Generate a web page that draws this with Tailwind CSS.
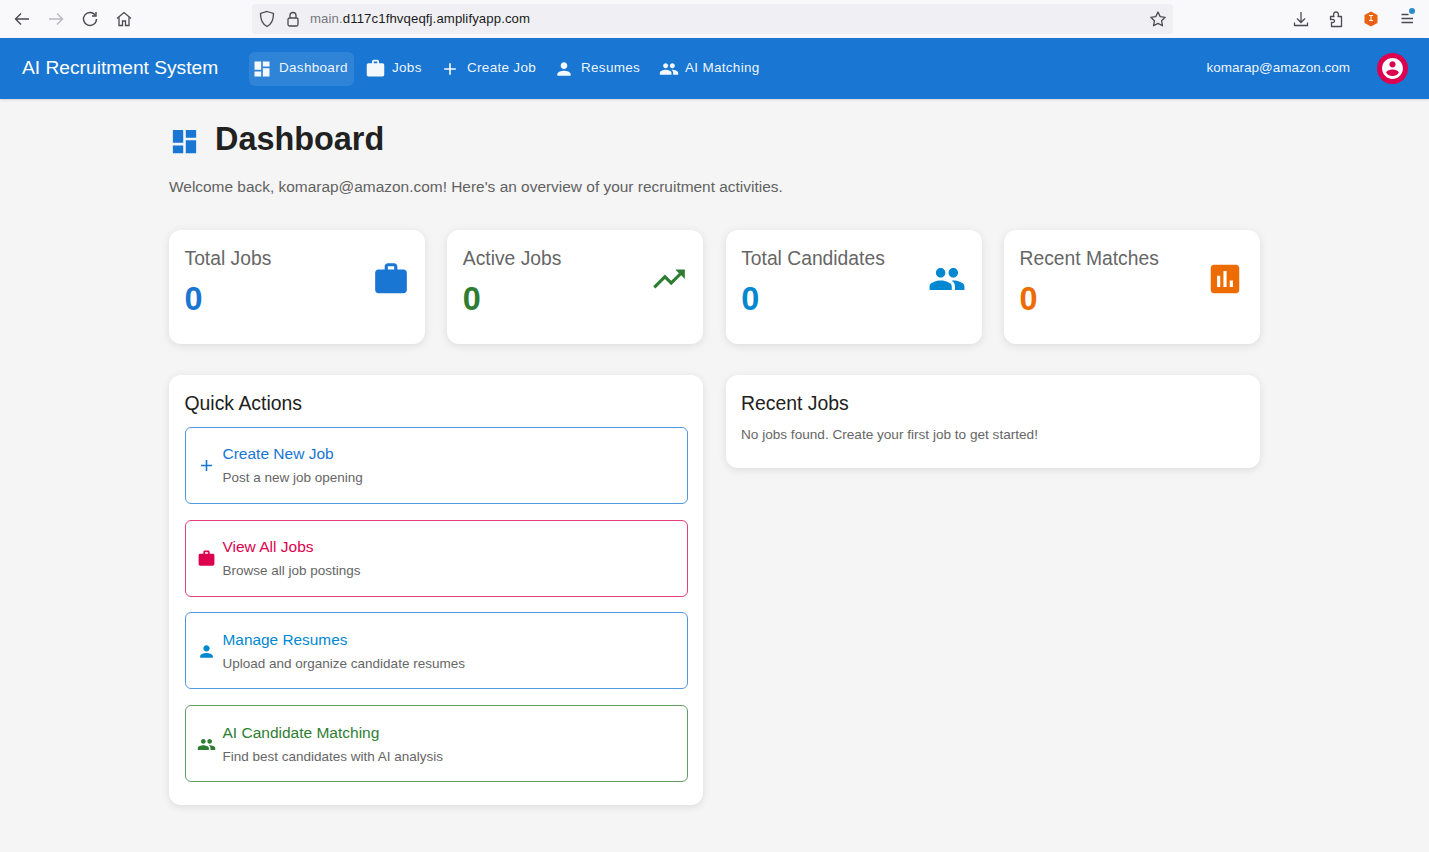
<!DOCTYPE html>
<html lang="en">
  <head>
    <meta charset="UTF-8" />
    <meta name="viewport" content="width=device-width, initial-scale=1.0" />
    <title>AI Recruitment System</title>
    <script src="https://cdn.jsdelivr.net/npm/@tailwindcss/browser@4"></script>
  </head>
  <body class="bg-[#f5f5f5] font-['Liberation_Sans',Arial,sans-serif] h-[852px] overflow-hidden">
    <!-- browser toolbar -->
    <div class="h-[38px] bg-[#f9f9fb] flex items-center text-[#4a4a4f]">
      <div class="w-[252px] flex items-center pl-[13px] gap-[16px] shrink-0">
        <svg class="w-[18px] h-[18px]" viewBox="0 0 18 18" fill="none" stroke="currentColor" stroke-width="1.4"><path d="M16 9H2.5M8 3.5 2.5 9 8 14.5" /></svg>
        <svg class="w-[18px] h-[18px] text-[#b9b9bd]" viewBox="0 0 18 18" fill="none" stroke="currentColor" stroke-width="1.4"><path d="M2 9h13.5M10 3.5 15.5 9 10 14.5" /></svg>
        <svg class="w-[18px] h-[18px]" viewBox="0 0 18 18" fill="none" stroke="currentColor" stroke-width="1.4"><path d="M14.5 5.5A6.5 6.5 0 1 0 15.5 9" /><path d="M15 2v4h-4" /></svg>
        <svg class="w-[18px] h-[18px]" viewBox="0 0 18 18" fill="none" stroke="currentColor" stroke-width="1.3"><path d="M2 8.5 9 2.5l7 6M4 7.5V15.5h3.5V11h3v4.5H14V7.5" /></svg>
      </div>
      <div class="w-[921px] h-[30px] bg-[#f0f0f4] rounded-[4px] flex items-center pl-[6px] pr-[6px] shrink-0">
        <svg class="w-[16px] h-[18px] ml-[1px]" viewBox="0 0 16 18" fill="none" stroke="currentColor" stroke-width="1.3"><path d="M8 1.5 14.5 3.5C14.5 10 13 14 8 16.5 3 14 1.5 10 1.5 3.5z" /></svg>
        <svg class="w-[14px] h-[16px] ml-[11px]" viewBox="0 0 14 16" fill="none" stroke="currentColor" stroke-width="1.3"><rect x="2" y="7" width="10" height="8" rx="1.5" /><path d="M4 7V4.5a3 3 0 0 1 6 0V7" /></svg>
        <span class="ml-[10px] text-[13.2px] text-[#77777c] tracking-[0.1px]">main.<span class="text-[#1c1b22]">d117c1fhvqeqfj.amplifyapp.com</span></span>
        <svg class="w-[18px] h-[18px] ml-auto" viewBox="0 0 18 18" fill="none" stroke="currentColor" stroke-width="1.3" stroke-linejoin="round"><path d="m9 2 2.2 4.6 5 .7-3.6 3.5.9 5L9 13.4l-4.5 2.4.9-5L1.8 7.3l5-.7z" /></svg>
      </div>
      <div class="flex-1 flex items-center justify-end pr-[13px] gap-[17px]">
        <svg class="w-[18px] h-[18px]" viewBox="0 0 18 18" fill="none" stroke="currentColor" stroke-width="1.3"><path d="M9 2v10M5 8.500l4 4 4-4M2.500 12.500v3h13v-3" /></svg>
        <svg class="w-[18px] h-[18px]" viewBox="0 0 18 18" fill="none" stroke="currentColor" stroke-width="1.3" stroke-linejoin="round"><path d="M3.500 6.500H7C6 4.500 6.500 2 9 2s3 2.500 2 4.500h3.500V16.500H4.500v-4c2 .5 3-.5 3-1.500s-1.500-2-4-1.500z" /></svg>
        <svg class="w-[18px] h-[18px]" viewBox="0 0 18 18"><path d="M9 1.500 15.500 5v8L9 16.500 2.500 13V5z" fill="#ea640f" /><path d="M7 5.500h4M9 5.500v5M7 10.500h4" stroke="#fff" stroke-width="1" fill="none" /><path d="M6 13h1M9 14h1M11 12.500h1" stroke="#d92d7a" stroke-width="1" /></svg>
        <div class="relative w-[18px] h-[18px] ml-[1px]">
          <svg class="w-[18px] h-[18px]" viewBox="0 0 18 18" fill="none" stroke="currentColor" stroke-width="1.3"><path d="M3.500 4.500h7M3.500 8.500h11.500M3.500 12.500h11.500" /></svg>
          <span class="absolute right-[1px] top-[-2px] w-[6px] h-[6px] rounded-full bg-[#2b8ccb]"></span>
        </div>
      </div>
    </div>

    <!-- app bar -->
    <nav class="h-[61px] bg-[#1976d2] text-white flex items-center pl-[22px] pr-[21px] shadow-sm">
      <span class="text-[19.2px] leading-none w-[227px] shrink-0 mb-[2px]">AI Recruitment System</span>
      <div class="flex items-center text-[13.5px] tracking-[0.3px] text-white/95">
        <a class="h-[34px] w-[105px] pl-[3px] rounded-[6px] bg-white/10 flex items-center gap-[7px]">
          <svg class="w-[20px] h-[20px] fill-current" viewBox="0 0 24 24"><path d="M3 13h8V3H3v10zm0 8h8v-6H3v6zm10 0h8V11h-8v10zm0-18v6h8V3h-8z" /></svg>Dashboard</a>
        <a class="h-[34px] w-[84px] pl-[11px] flex items-center gap-[6px]">
          <svg class="w-[21px] h-[21px] fill-current" viewBox="0 0 24 24"><path d="M20 6h-4V4c0-1.110-.89-2-2-2h-4c-1.110 0-2 .89-2 2v2H4c-1.110 0-1.990.89-1.990 2L2 19c0 1.110.89 2 2 2h16c1.110 0 2-.89 2-2V8c0-1.110-.89-2-2-2zm-6 0h-4V4h4v2z" /></svg>Jobs</a>
        <a class="h-[34px] w-[113px] pl-[2px] flex items-center gap-[7px]">
          <svg class="w-[20px] h-[20px] fill-current" viewBox="0 0 24 24"><path d="M19 13h-6v6h-2v-6H5v-2h6V5h2v6h6v2z" /></svg>Create Job</a>
        <a class="h-[34px] w-[106px] pl-[3px] flex items-center gap-[7px]">
          <svg class="w-[20px] h-[20px] fill-current" viewBox="0 0 24 24"><path d="M12 12c2.210 0 4-1.790 4-4s-1.790-4-4-4-4 1.790-4 4 1.790 4 4 4zm0 2c-2.670 0-8 1.340-8 4v2h16v-2c0-2.660-5.330-4-8-4z" /></svg>Resumes</a>
        <a class="h-[34px] pl-[2px] flex items-center gap-[6px]">
          <svg class="w-[20px] h-[20px] fill-current" viewBox="0 0 24 24"><path d="M16 11c1.660 0 2.990-1.340 2.990-3S17.660 5 16 5c-1.660 0-3 1.340-3 3s1.340 3 3 3zm-8 0c1.660 0 2.990-1.340 2.990-3S9.660 5 8 5C6.340 5 5 6.340 5 8s1.340 3 3 3zm0 2c-2.330 0-7 1.170-7 3.500V19h14v-2.500c0-2.330-4.670-3.500-7-3.500zm8 0c-.29 0-.62.02-.97.05 1.160.84 1.970 1.970 1.970 3.450V19h6v-2.500c0-2.330-4.670-3.500-7-3.500z" /></svg>AI Matching</a>
      </div>
      <span class="ml-auto text-[13.5px] text-white/95">komarap@amazon.com</span>
      <span class="ml-[27px] w-[31px] h-[31px] rounded-full bg-[#dc004e] flex items-center justify-center">
        <svg class="w-[25px] h-[25px] fill-white" viewBox="0 0 24 24"><path d="M12 2C6.480 2 2 6.480 2 12s4.480 10 10 10 10-4.480 10-10S17.520 2 12 2zm0 3c1.660 0 3 1.340 3 3s-1.340 3-3 3-3-1.340-3-3 1.340-3 3-3zm0 14.200c-2.500 0-4.710-1.280-6-3.220.03-1.990 4-3.080 6-3.080 1.990 0 5.970 1.090 6 3.080-1.290 1.940-3.500 3.220-6 3.220z" /></svg>
      </span>
    </nav>

    <main class="w-[1091px] ml-[169px]">
      <div class="flex items-center h-[80px]">
        <svg class="w-[31px] h-[31px] mt-[4px] fill-[#1976d2]" viewBox="0 0 24 24"><path d="M3 13h8V3H3v10zm0 8h8v-6H3v6zm10 0h8V11h-8v10zm0-18v6h8V3h-8z" /></svg>
        <h1 class="ml-[15px] text-[32.4px] font-bold text-[#212121] leading-none">Dashboard</h1>
      </div>
      <p class="text-[15.45px] text-[#616161] leading-[18px] mt-[-1px]">Welcome back, komarap@amazon.com! Here's an overview of your recruitment activities.</p>

      <!-- stat cards -->
      <div class="grid grid-cols-[repeat(4,256px)] gap-[22.33px] mt-[34px]">
        <div class="h-[114px] bg-white rounded-[12px] shadow-[0_2px_8px_rgba(0,0,0,0.1)] pl-[15.5px] pr-[15.5px] pt-[17px] flex justify-between">
          <div>
            <div class="text-[19.3px] leading-[23px] text-[#666666]">Total Jobs</div>
            <div class="text-[32.4px] font-bold leading-[38px] mt-[10px] text-[#1976d2]">0</div>
          </div>
          <svg class="w-[38px] h-[38px] mt-[13px] fill-[#1976d2]" viewBox="0 0 24 24"><path d="M20 6h-4V4c0-1.110-.89-2-2-2h-4c-1.110 0-2 .89-2 2v2H4c-1.110 0-1.990.89-1.990 2L2 19c0 1.110.89 2 2 2h16c1.110 0 2-.89 2-2V8c0-1.110-.89-2-2-2zm-6 0h-4V4h4v2z" /></svg>
        </div>
        <div class="h-[114px] bg-white rounded-[12px] shadow-[0_2px_8px_rgba(0,0,0,0.1)] pl-[15.5px] pr-[15.5px] pt-[17px] flex justify-between">
          <div>
            <div class="text-[19.3px] leading-[23px] text-[#666666]">Active Jobs</div>
            <div class="text-[32.4px] font-bold leading-[38px] mt-[10px] text-[#2e7d32]">0</div>
          </div>
          <svg class="w-[38px] h-[38px] mt-[13px] fill-[#2e7d32]" viewBox="0 0 24 24"><path d="M16 6l2.290 2.290-4.880 4.880-4-4L2 16.590 3.410 18l6-6 4 4 6.300-6.290L22 12V6z" /></svg>
        </div>
        <div class="h-[114px] bg-white rounded-[12px] shadow-[0_2px_8px_rgba(0,0,0,0.1)] pl-[15.5px] pr-[15.5px] pt-[17px] flex justify-between">
          <div>
            <div class="text-[19.3px] leading-[23px] text-[#666666]">Total Candidates</div>
            <div class="text-[32.4px] font-bold leading-[38px] mt-[10px] text-[#0288d1]">0</div>
          </div>
          <svg class="w-[38px] h-[38px] mt-[13px] fill-[#0288d1]" viewBox="0 0 24 24"><path d="M16 11c1.660 0 2.990-1.340 2.990-3S17.660 5 16 5c-1.660 0-3 1.340-3 3s1.340 3 3 3zm-8 0c1.660 0 2.990-1.340 2.990-3S9.660 5 8 5C6.340 5 5 6.340 5 8s1.340 3 3 3zm0 2c-2.330 0-7 1.170-7 3.500V19h14v-2.500c0-2.330-4.670-3.500-7-3.500zm8 0c-.29 0-.62.02-.97.05 1.160.84 1.970 1.970 1.970 3.450V19h6v-2.500c0-2.330-4.670-3.500-7-3.500z" /></svg>
        </div>
        <div class="h-[114px] bg-white rounded-[12px] shadow-[0_2px_8px_rgba(0,0,0,0.1)] pl-[15.5px] pr-[15.5px] pt-[17px] flex justify-between">
          <div>
            <div class="text-[19.3px] leading-[23px] text-[#666666]">Recent Matches</div>
            <div class="text-[32.4px] font-bold leading-[38px] mt-[10px] text-[#ed6c02]">0</div>
          </div>
          <svg class="w-[38px] h-[38px] mt-[13px] fill-[#ed6c02]" viewBox="0 0 24 24"><path d="M19 3H5c-1.100 0-2 .9-2 2v14c0 1.100.9 2 2 2h14c1.100 0 2-.9 2-2V5c0-1.100-.9-2-2-2zM9 17H7v-7h2v7zm4 0h-2V7h2v10zm4 0h-2v-4h2v4z" /></svg>
        </div>
      </div>

      <div class="grid grid-cols-[534px_534px] gap-[23px] mt-[31px] items-start">
        <!-- quick actions -->
        <section class="bg-white rounded-[12px] shadow-[0_2px_8px_rgba(0,0,0,0.1)] px-[15.5px] pt-[17px] h-[430px]">
          <h2 class="text-[19.4px] leading-[23px] text-[#212121]">Quick Actions</h2>
          <div class="mt-[12px] flex flex-col gap-[15.7px]">
            <a class="h-[77px] rounded-[6px] border border-[#1976d2]/75 flex items-center">
              <svg class="w-[19px] h-[19px] ml-[11px] fill-[#1976d2]" viewBox="0 0 24 24"><path d="M19 13h-6v6h-2v-6H5v-2h6V5h2v6h6v2z" /></svg>
              <div class="ml-[7px]">
                <div class="text-[15.5px] leading-[18px] text-[#1976d2]">Create New Job</div>
                <div class="text-[13.5px] leading-[16px] mt-[7px] text-[#666666]">Post a new job opening</div>
              </div>
            </a>
            <a class="h-[77px] rounded-[6px] border border-[#dc004e]/75 flex items-center">
              <svg class="w-[19px] h-[19px] ml-[11px] fill-[#dc004e]" viewBox="0 0 24 24"><path d="M20 6h-4V4c0-1.110-.89-2-2-2h-4c-1.110 0-2 .89-2 2v2H4c-1.110 0-1.990.89-1.990 2L2 19c0 1.110.89 2 2 2h16c1.110 0 2-.89 2-2V8c0-1.110-.89-2-2-2zm-6 0h-4V4h4v2z" /></svg>
              <div class="ml-[7px]">
                <div class="text-[15.5px] leading-[18px] text-[#dc004e]">View All Jobs</div>
                <div class="text-[13.5px] leading-[16px] mt-[7px] text-[#666666]">Browse all job postings</div>
              </div>
            </a>
            <a class="h-[77px] pt-[2px] rounded-[6px] border border-[#1976d2]/75 flex items-center">
              <svg class="w-[19px] h-[19px] ml-[11px] fill-[#0288d1]" viewBox="0 0 24 24"><path d="M12 12c2.210 0 4-1.790 4-4s-1.790-4-4-4-4 1.790-4 4 1.790 4 4 4zm0 2c-2.670 0-8 1.340-8 4v2h16v-2c0-2.660-5.330-4-8-4z" /></svg>
              <div class="ml-[7px]">
                <div class="text-[15.4px] leading-[18px] text-[#0288d1]">Manage Resumes</div>
                <div class="text-[13.5px] leading-[16px] mt-[7px] text-[#666666]">Upload and organize candidate resumes</div>
              </div>
            </a>
            <a class="h-[77px] pt-[2px] rounded-[6px] border border-[#2e7d32]/75 flex items-center">
              <svg class="w-[19px] h-[19px] ml-[11px] fill-[#2e7d32]" viewBox="0 0 24 24"><path d="M16 11c1.660 0 2.990-1.340 2.990-3S17.660 5 16 5c-1.660 0-3 1.340-3 3s1.340 3 3 3zm-8 0c1.660 0 2.990-1.340 2.990-3S9.660 5 8 5C6.340 5 5 6.340 5 8s1.340 3 3 3zm0 2c-2.330 0-7 1.170-7 3.500V19h14v-2.500c0-2.330-4.670-3.500-7-3.500zm8 0c-.29 0-.62.02-.97.05 1.160.84 1.970 1.970 1.970 3.450V19h6v-2.500c0-2.330-4.670-3.500-7-3.500z" /></svg>
              <div class="ml-[7px]">
                <div class="text-[15.5px] leading-[18px] text-[#2e7d32]">AI Candidate Matching</div>
                <div class="text-[13.5px] leading-[16px] mt-[7px] text-[#666666]">Find best candidates with AI analysis</div>
              </div>
            </a>
          </div>
        </section>

        <!-- recent jobs -->
        <section class="bg-white rounded-[12px] shadow-[0_2px_8px_rgba(0,0,0,0.1)] px-[15px] pt-[17px] h-[93px]">
          <h2 class="text-[19.4px] leading-[23px] text-[#212121]">Recent Jobs</h2>
          <p class="text-[13.6px] leading-[16px] mt-[12px] text-[#666666]">No jobs found. Create your first job to get started!</p>
        </section>
      </div>
    </main>
  </body>
</html>
